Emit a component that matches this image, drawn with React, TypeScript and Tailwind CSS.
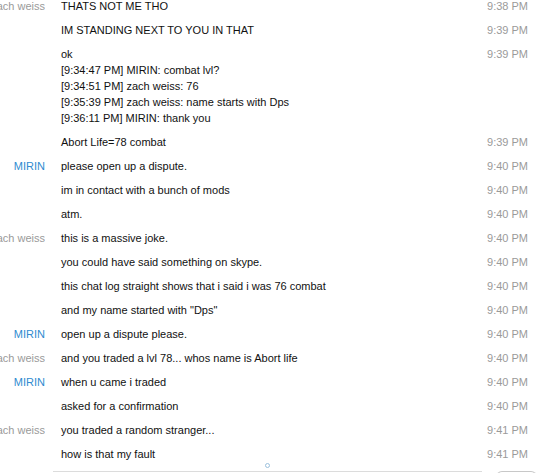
import React from "react";

interface Msg {
  name?: "zach weiss" | "MIRIN";
  lines: string[];
  time: string;
}

const messages: Msg[] = [
  { name: "zach weiss", lines: ["THATS NOT ME THO"], time: "9:38 PM" },
  { lines: ["IM STANDING NEXT TO YOU IN THAT"], time: "9:39 PM" },
  {
    lines: [
      "ok",
      "[9:34:47 PM] MIRIN: combat lvl?",
      "[9:34:51 PM] zach weiss: 76",
      "[9:35:39 PM] zach weiss: name starts with Dps",
      "[9:36:11 PM] MIRIN: thank you",
    ],
    time: "9:39 PM",
  },
  { lines: ["Abort Life=78 combat"], time: "9:39 PM" },
  { name: "MIRIN", lines: ["please open up a dispute."], time: "9:40 PM" },
  { lines: ["im in contact with a bunch of mods"], time: "9:40 PM" },
  { lines: ["atm."], time: "9:40 PM" },
  { name: "zach weiss", lines: ["this is a massive joke."], time: "9:40 PM" },
  { lines: ["you could have said something on skype."], time: "9:40 PM" },
  { lines: ["this chat log straight shows that i said i was 76 combat"], time: "9:40 PM" },
  { lines: ['and my name started with "Dps"'], time: "9:40 PM" },
  { name: "MIRIN", lines: ["open up a dispute please."], time: "9:40 PM" },
  { name: "zach weiss", lines: ["and you traded a lvl 78... whos name is Abort life"], time: "9:40 PM" },
  { name: "MIRIN", lines: ["when u came i traded"], time: "9:40 PM" },
  { lines: ["asked for a confirmation"], time: "9:40 PM" },
  { name: "zach weiss", lines: ["you traded a random stranger..."], time: "9:41 PM" },
  { lines: ["how is that my fault"], time: "9:41 PM" },
];

export default function App() {
  return (
    <div
      className="relative w-[560px] h-[473px] overflow-hidden bg-white text-[11px] leading-[16px]"
      style={{ fontFamily: "'Liberation Sans', Arial, sans-serif" }}
    >
      <div className="flex flex-col -mt-[6px]">
        {messages.map((m, i) => (
          <div key={i} className="flex items-start py-[4px]">
            {/* sender */}
            <div className="w-[45px] shrink-0 flex justify-end overflow-hidden whitespace-nowrap">
              {m.name && (
                <span className={m.name === "MIRIN" ? "text-[#2f8bd0]" : "text-[#9a9a9a]"}>{m.name}</span>
              )}
            </div>
            {/* body */}
            <div className="flex-1 pl-[16px] text-[#111]">
              {m.lines.map((l, j) => (
                <div key={j} className="whitespace-nowrap">
                  {l}
                </div>
              ))}
            </div>
            {/* time */}
            <div className="w-[60px] shrink-0 text-right pr-[32px] box-content whitespace-nowrap text-[#9a9a9a]">
              {m.time}
            </div>
          </div>
        ))}
      </div>

      {/* top edge of the input box */}
      <div className="flex items-start pt-[5px]">
        <div className="ml-[53px] w-[429px] border-t border-[#dcdcdc]" />
        <div className="ml-[14px] w-[41px] h-[10px] rounded-t-[6px] border border-b-0 border-[#c8c8c8]" />
      </div>

      <div className="absolute left-[265px] top-[463px] w-[5px] h-[5px] rounded-full border border-[#9cc1dd]" />
    </div>
  );
}
